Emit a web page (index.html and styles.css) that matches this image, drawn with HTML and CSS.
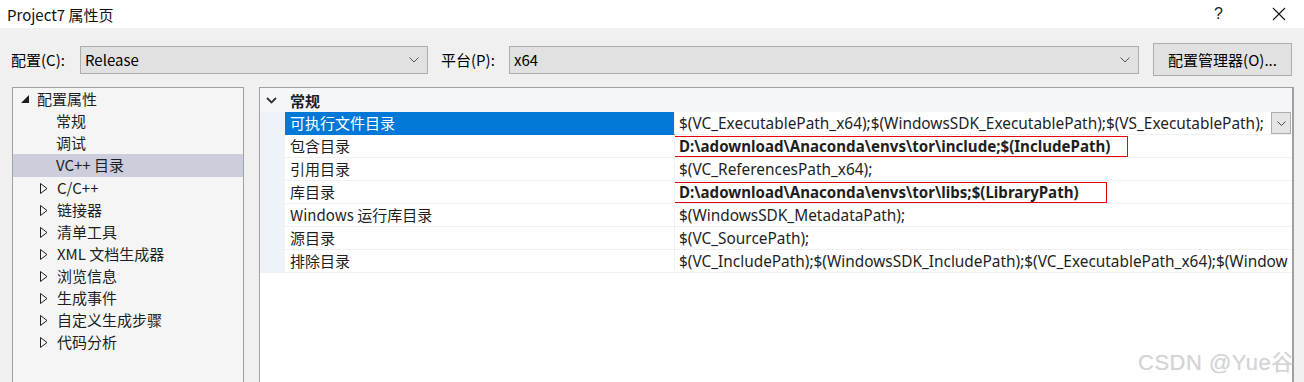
FILE: index.html
```html
<!DOCTYPE html>
<html lang="zh-CN">
<head>
<meta charset="utf-8">
<title>Project7 属性页</title>
<link rel="stylesheet" href="styles.css">
</head>
<body>
<div class="window">
  <div class="titlebar">
    <span class="title">Project7 属性页</span>
    <span class="tb-help">?</span>
    <span class="tb-close"><svg width="14" height="14" viewBox="0 0 14 14"><path d="M1 1L13 13M13 1L1 13" stroke="#111" stroke-width="1.1" fill="none"/></svg></span>
  </div>
  <div class="toolbar">
    <span class="label label-cfg">配置(C):</span>
    <div class="select select-cfg"><span>Release</span><svg class="chev" width="10" height="6" viewBox="0 0 10 6"><path d="M0.5 0.5L5 5L9.5 0.5" stroke="#555" stroke-width="1" fill="none"/></svg></div>
    <span class="label label-plat">平台(P):</span>
    <div class="select select-plat"><span>x64</span><svg class="chev" width="10" height="6" viewBox="0 0 10 6"><path d="M0.5 0.5L5 5L9.5 0.5" stroke="#555" stroke-width="1" fill="none"/></svg></div>
    <div class="button">配置管理器(O)...</div>
  </div>
  <div class="main">
    <div class="tree">
      <div class="node root"><svg class="tri" width="8" height="8" viewBox="0 0 8 8"><path d="M8 0L8 8L0 8Z" fill="#1e1e1e"/></svg><span>配置属性</span></div>
      <div class="node leaf">常规</div>
      <div class="node leaf">调试</div>
      <div class="node leaf selected">VC++ 目录</div>
      <div class="node branch"><svg class="tri2" width="8" height="11" viewBox="0 0 8 11"><path d="M0.5 0.5L7 5.5L0.5 10.5Z" fill="none" stroke="#1e1e1e" stroke-width="1"/></svg><span>C/C++</span></div>
      <div class="node branch"><svg class="tri2" width="8" height="11" viewBox="0 0 8 11"><path d="M0.5 0.5L7 5.5L0.5 10.5Z" fill="none" stroke="#1e1e1e" stroke-width="1"/></svg><span>链接器</span></div>
      <div class="node branch"><svg class="tri2" width="8" height="11" viewBox="0 0 8 11"><path d="M0.5 0.5L7 5.5L0.5 10.5Z" fill="none" stroke="#1e1e1e" stroke-width="1"/></svg><span>清单工具</span></div>
      <div class="node branch"><svg class="tri2" width="8" height="11" viewBox="0 0 8 11"><path d="M0.5 0.5L7 5.5L0.5 10.5Z" fill="none" stroke="#1e1e1e" stroke-width="1"/></svg><span>XML 文档生成器</span></div>
      <div class="node branch"><svg class="tri2" width="8" height="11" viewBox="0 0 8 11"><path d="M0.5 0.5L7 5.5L0.5 10.5Z" fill="none" stroke="#1e1e1e" stroke-width="1"/></svg><span>浏览信息</span></div>
      <div class="node branch"><svg class="tri2" width="8" height="11" viewBox="0 0 8 11"><path d="M0.5 0.5L7 5.5L0.5 10.5Z" fill="none" stroke="#1e1e1e" stroke-width="1"/></svg><span>生成事件</span></div>
      <div class="node branch"><svg class="tri2" width="8" height="11" viewBox="0 0 8 11"><path d="M0.5 0.5L7 5.5L0.5 10.5Z" fill="none" stroke="#1e1e1e" stroke-width="1"/></svg><span>自定义生成步骤</span></div>
      <div class="node branch"><svg class="tri2" width="8" height="11" viewBox="0 0 8 11"><path d="M0.5 0.5L7 5.5L0.5 10.5Z" fill="none" stroke="#1e1e1e" stroke-width="1"/></svg><span>代码分析</span></div>
    </div>
    <div class="grid">
      <div class="group">
        <svg class="gchev" width="11" height="7" viewBox="0 0 11 7"><path d="M1 1L5.5 5.5L10 1" stroke="#333" stroke-width="1.8" fill="none"/></svg>
        <span class="gname">常规</span>
      </div>
      <div class="prop active">
        <div class="gutter"></div>
        <div class="pname">可执行文件目录</div>
        <div class="pval"><span class="vtext">$(VC_ExecutablePath_x64);$(WindowsSDK_ExecutablePath);$(VS_ExecutablePath);</span><span class="ddbtn"><svg width="9" height="5" viewBox="0 0 9 5"><path d="M0.5 0.5L4.5 4.5L8.5 0.5" stroke="#444" stroke-width="1" fill="none"/></svg></span></div>
      </div>
      <div class="prop">
        <div class="gutter"></div>
        <div class="pname">包含目录</div>
        <div class="pval"><span class="vtext bold mark mark1">D:\adownload\Anaconda\envs\tor\include;$(IncludePath)</span></div>
      </div>
      <div class="prop">
        <div class="gutter"></div>
        <div class="pname">引用目录</div>
        <div class="pval"><span class="vtext">$(VC_ReferencesPath_x64);</span></div>
      </div>
      <div class="prop">
        <div class="gutter"></div>
        <div class="pname">库目录</div>
        <div class="pval"><span class="vtext bold mark mark2">D:\adownload\Anaconda\envs\tor\libs;$(LibraryPath)</span></div>
      </div>
      <div class="prop">
        <div class="gutter"></div>
        <div class="pname">Windows 运行库目录</div>
        <div class="pval"><span class="vtext">$(WindowsSDK_MetadataPath);</span></div>
      </div>
      <div class="prop">
        <div class="gutter"></div>
        <div class="pname">源目录</div>
        <div class="pval"><span class="vtext">$(VC_SourcePath);</span></div>
      </div>
      <div class="prop">
        <div class="gutter"></div>
        <div class="pname">排除目录</div>
        <div class="pval"><span class="vtext clip">$(VC_IncludePath);$(WindowsSDK_IncludePath);$(VC_ExecutablePath_x64);$(Window</span></div>
      </div>
    </div>
  </div>
  <div class="watermark">CSDN @Yue谷</div>
</div>
</body>
</html>
```

FILE: styles.css
```css
* { box-sizing: border-box; }
html, body { margin: 0; padding: 0; }
body {
  width: 1304px;
  height: 382px;
  overflow: hidden;
  background: #f0f0f0;
  font-family: "Noto Sans", "Noto Sans CJK SC", sans-serif;
  color: #000;
}
.window { position: relative; height: 382px; overflow: hidden; }

.titlebar {
  height: 28px;
  background: #fff;
  display: flex;
  align-items: center;
  padding-left: 7px;
  font-family: "Noto Sans CJK SC", sans-serif;
}
.title { font-size: 15px; flex: 1; color: #111; }
.tb-help { font-size: 16px; width: 58px; color: #222; font-family: "Liberation Sans", sans-serif; }
.tb-close { width: 32px; display: flex; }

.toolbar {
  height: 59px;
  display: flex;
  align-items: center;
  padding-top: 4px;
  font-family: "Noto Sans CJK SC", sans-serif;
  font-size: 15px;
}
.label { color: #000; }
.label-cfg { margin-left: 11px; width: 69px; }
.label-plat { margin-left: 13px; width: 68px; }
.select {
  height: 28px;
  background: #e1e1e1;
  border: 1px solid #adadad;
  display: flex;
  align-items: center;
  justify-content: space-between;
  padding: 0 8px 0 4px;
  font-size: 15px;
}
.select-cfg { width: 348px; }
.select-plat { width: 630px; }
.chev { flex: none; }
.button {
  margin-left: 14px;
  width: 139px;
  height: 33px;
  background: #e1e1e1;
  border: 1px solid #adadad;
  display: flex;
  align-items: center;
  justify-content: center;
  font-size: 15px;
}

.main {
  display: flex;
  gap: 15px;
  padding-left: 12px;
}
.tree {
  width: 232px;
  height: 320px;
  background: #f5f5f5;
  border: 1px solid #a0a0a0;
  font-family: "Noto Sans CJK SC", sans-serif;
  font-size: 15px;
  color: #1e1e1e;
}
.node {
  height: 22px;
  display: flex;
  align-items: center;
  white-space: nowrap;
  padding-bottom: 2px;
}
.node.root { padding-left: 8px; gap: 8px; }
.node.leaf { padding-left: 43px; }
.node.branch { padding-left: 27px; gap: 9px; }
.node.selected { background: #cccedb; height: 23px; }
.tri { margin-top: 1px; }
.tri2 { margin-top: 2px; }

.grid {
  width: 1035px;
  height: 320px;
  background: #fff;
  border: 1px solid #a0a0a0;
  border-right: 2px solid #a0a0a0;
  font-family: "Noto Sans CJK SC", sans-serif;
  font-size: 15px;
  color: #1e1e1e;
}
.group {
  height: 24px;
  background: #f4f6f9;
  display: flex;
  align-items: center;
  padding-left: 6px;
  gap: 13px;
}
.gname { font-weight: bold; color: #1e1e1e; }
.prop {
  display: flex;
  height: 23px;
}
.gutter {
  width: 25px;
  flex: none;
  background: #eef3fa;
}
.pname {
  width: 390px;
  flex: none;
  padding-left: 5px;
  padding-bottom: 2px;
  display: flex;
  align-items: center;
  border-bottom: 1px solid #f0f0f0;
  border-right: 1px solid #f0f0f0;
  white-space: nowrap;
}
.prop.active .pname { background: #0078d7; color: #fff; border-bottom-color: #0078d7; }
.pval {
  flex: 1;
  display: flex;
  align-items: center;
  justify-content: space-between;
  border-bottom: 1px solid #f0f0f0;
  padding-left: 4px;
  white-space: nowrap;
  overflow: hidden;
  position: relative;
}
.vtext {
  font-family: "Noto Sans", sans-serif;
  font-size: 15.4px;
  white-space: nowrap;
}
.vtext.bold { font-weight: bold; font-size: 15.1px; }
.mark { position: relative; }
.mark::after {
  content: "";
  position: absolute;
  top: 0;
  bottom: -1px;
  border: 1px solid #e8000b;
}
.mark1::after { left: -5px; width: 452px; }
.mark2::after { left: -8px; width: 434px; }
.ddbtn {
  width: 20px;
  height: 22px;
  flex: none;
  margin-right: 1px;
  background: #e5e5e5;
  border: 1px solid #adadad;
  display: flex;
  align-items: center;
  justify-content: center;
}

.watermark {
  position: absolute;
  left: 1138px;
  top: 344px;
  font-family: "Liberation Sans", "Noto Sans CJK SC", sans-serif;
  font-size: 22px;
  letter-spacing: 0.5px;
  color: #d4d4d4;
  text-shadow: 0 0 1px #e6e6e6;
  white-space: nowrap;
}
```
